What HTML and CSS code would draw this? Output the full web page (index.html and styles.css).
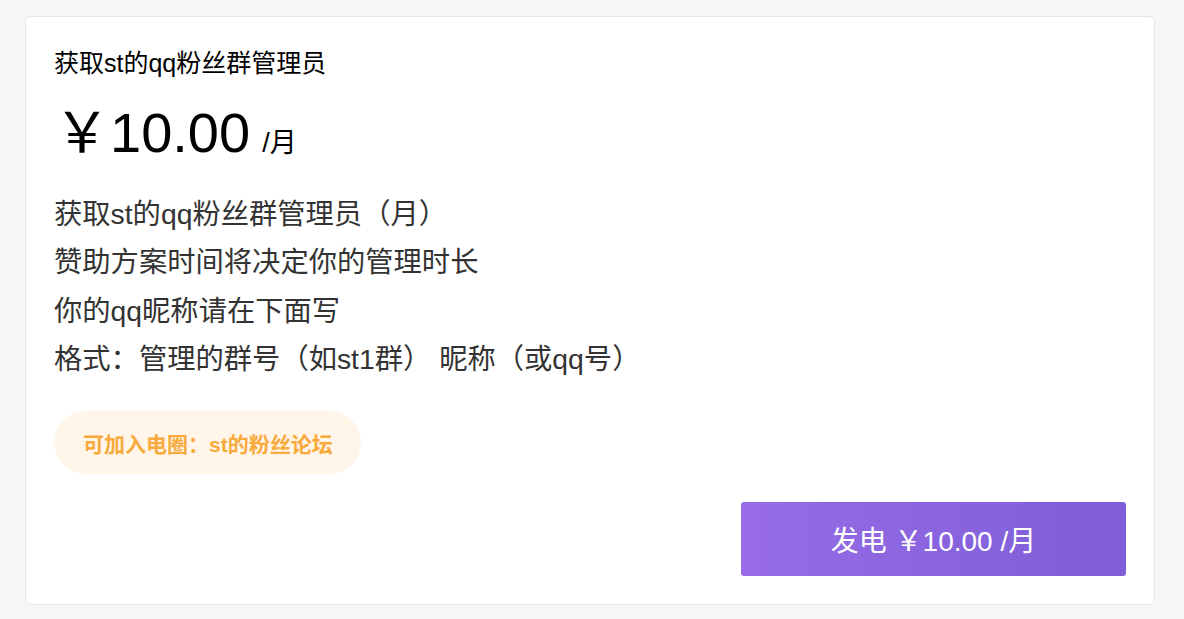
FILE: index.html
```html
<!DOCTYPE html>
<html lang="zh-CN">
<head>
<meta charset="utf-8">
<title>发电方案</title>
<link rel="stylesheet" href="styles.css">
</head>
<body>
<div class="page">
  <div class="card">
    <div class="plan-title">获取st的qq粉丝群管理员</div>
    <div class="price"><span class="price-num">￥10.00</span><span class="price-unit">/月</span></div>
    <div class="desc">
      <div>获取st的qq粉丝群管理员（月）</div>
      <div>赞助方案时间将决定你的管理时长</div>
      <div>你的qq昵称请在下面写</div>
      <div>格式：管理的群号（如st1群） 昵称（或qq号）</div>
    </div>
    <div class="badge-row"><span class="badge">可加入电圈：st的粉丝论坛</span></div>
    <div class="actions"><button class="btn">发电 ￥10.00 /月</button></div>
  </div>
</div>
</body>
</html>
```

FILE: styles.css
```css
html, body {
  margin: 0;
  padding: 0;
  background: #f6f6f6;
}
body {
  font-family: "Liberation Sans", "Noto Sans CJK SC", sans-serif;
  color: #000;
}
.page {
  padding: 16px 29px 14px 25px;
}
.card {
  background: #fff;
  border: 1px solid #e6e6e6;
  border-radius: 6px;
  padding: 28px;
}
.plan-title {
  font-size: 25px;
  line-height: 36px;
  color: #000;
}
.price {
  display: flex;
  align-items: baseline;
  margin-top: 16px;
  height: 72px;
}
.price-num {
  font-size: 56px;
  line-height: 72px;
  color: #000;
}
.price-unit {
  font-size: 27px;
  margin-left: 12px;
  color: #000;
}
.desc {
  margin-top: 21px;
  font-size: 28.3px;
  line-height: 48.3px;
  color: #333;
}
.badge-row {
  margin-top: 28px;
  display: flex;
}
.badge {
  display: inline-flex;
  align-items: center;
  height: 63px;
  padding: 0 28px 0 29px;
  border-radius: 32px;
  background: #fff5e8;
  color: #f8aa3c;
  font-size: 21px;
  font-weight: bold;
}
.actions {
  margin-top: 28px;
  display: flex;
  justify-content: flex-end;
}
.btn {
  width: 385px;
  height: 74px;
  border: none;
  border-radius: 3px;
  background: linear-gradient(to right, #976ce6, #7e5dd8);
  color: #fff;
  font-family: "Liberation Sans", "Noto Sans CJK SC", sans-serif;
  font-size: 28px;
  padding: 0;
  cursor: pointer;
}
```
